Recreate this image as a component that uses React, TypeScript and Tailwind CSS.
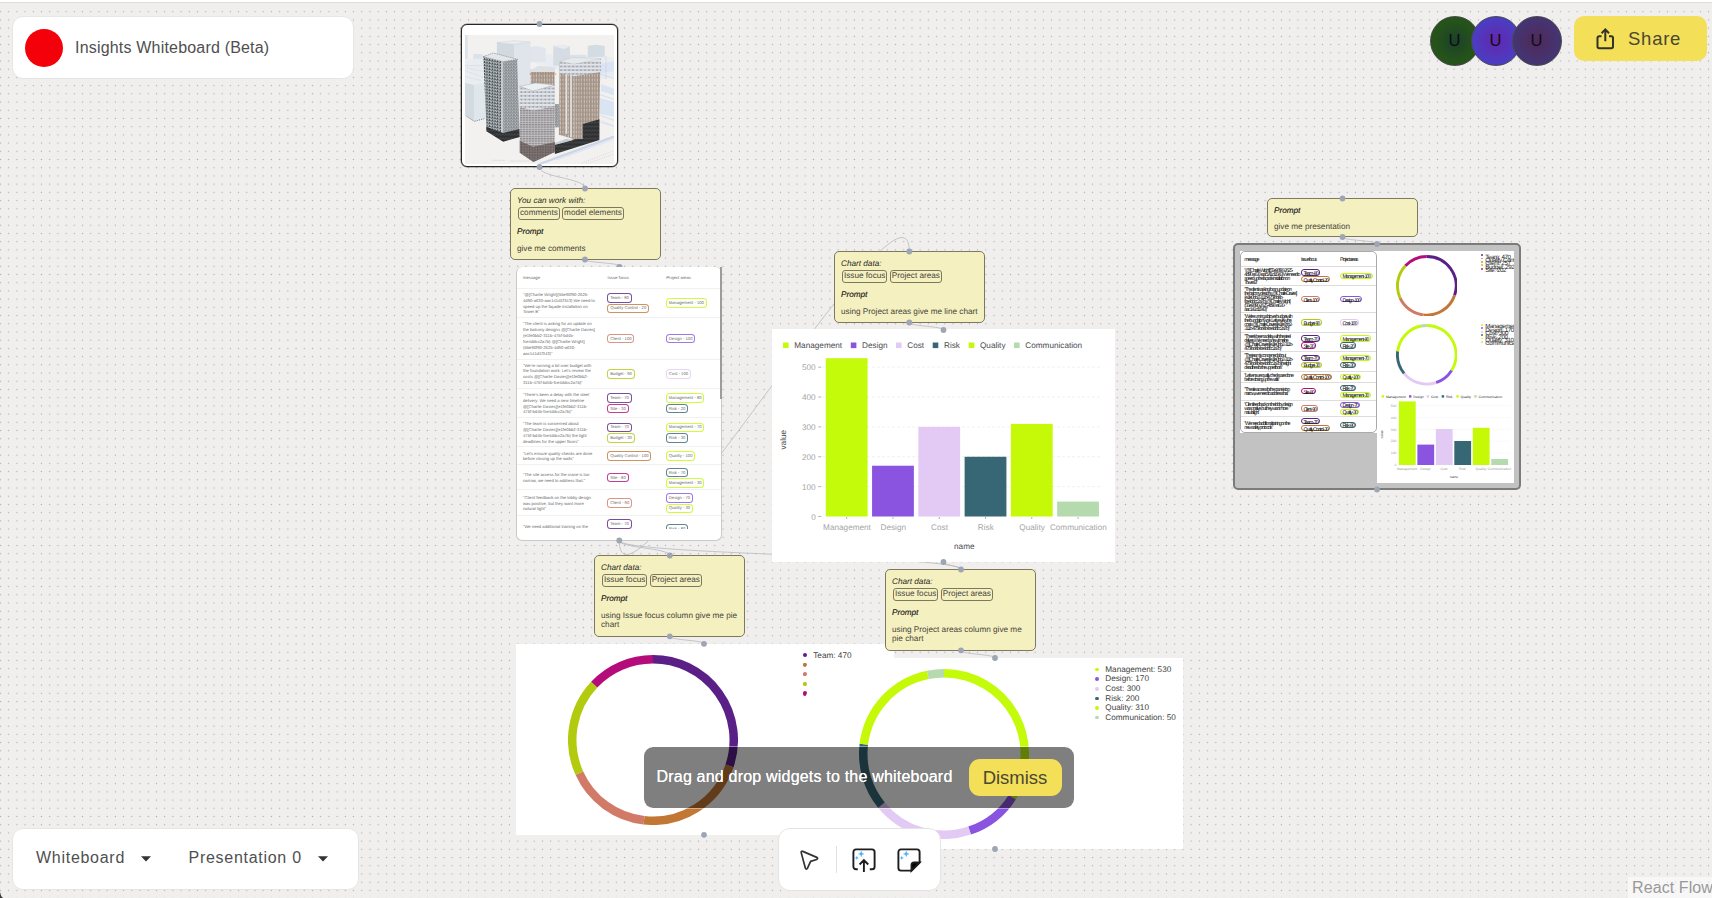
import React from "react";

const C = {
  Management: "#c3fb0a",
  Design: "#8a54e0",
  Cost: "#e3caf4",
  Risk: "#376774",
  Quality: "#c6f908",
  Communication: "#b5daae",
  Team: "#5b2087",
  "Quality Control": "#c27735",
  Client: "#d17a68",
  Budget: "#b3cb0f",
  Site: "#b40d7b",
} as Record<string, string>;

const projectAreas: [string, number][] = [
  ["Management", 530],
  ["Design", 170],
  ["Cost", 300],
  ["Risk", 200],
  ["Quality", 310],
  ["Communication", 50],
];

const issueFocus: [string, number][] = [
  ["Team", 470],
  ["Quality Control", 336],
  ["Client", 257],
  ["Budget", 292],
  ["Site", 202],
];

type Row = { lines: string[]; focus: string[]; areas: string[]; h: string; h2: string };

const rows: Row[] = [
  {
    lines: ['"@[Charlie Wright](55e90f90-2625-', "4d90-a630-aac141d1f343) We need to", "speed up the façade installation on", 'Tower B"'],
    focus: ["Team - 80", "Quality Control - 20"],
    areas: ["Management - 100"],
    h: "h-[29.5px]",
    h2: "h-[19.7px]",
  },
  {
    lines: ['"The client is asking for an update on', "the balcony designs @[Charlie Davies]", "(e1fe0bb2-311b-475f-bd4b-", "fce4ddcc2a7b) @[Charlie Wright]", "(55e90f90-2625-4d90-a630-", 'aac141d1f343)"'],
    focus: ["Client - 100"],
    areas: ["Design - 100"],
    h: "h-[41.4px]",
    h2: "h-[27px]",
  },
  {
    lines: ['"We\'re running a bit over budget with', "the foundation work. Let's review the", "costs @[Charlie Davies](e1fe0bb2-", '311b-475f-bd4b-fce4ddcc2a7b)"'],
    focus: ["Budget - 90"],
    areas: ["Cost - 100"],
    h: "h-[29.3px]",
    h2: "h-[19.6px]",
  },
  {
    lines: ['"There\'s been a delay with the steel', "delivery. We need a new timeline", "@[Charlie Davies](e1fe0bb2-311b-", '475f-bd4b-fce4ddcc2a7b)"'],
    focus: ["Team - 70", "Site - 30"],
    areas: ["Management - 80", "Risk - 20"],
    h: "h-[29.3px]",
    h2: "h-[19.4px]",
  },
  {
    lines: ['"The team is concerned about', "@[Charlie Davies](e1fe0bb2-311b-", "475f-bd4b-fce4ddcc2a7b) the tight", 'deadlines for the upper floors"'],
    focus: ["Team - 70", "Budget - 30"],
    areas: ["Management - 70", "Risk - 30"],
    h: "h-[29.2px]",
    h2: "h-[19.6px]",
  },
  {
    lines: ['"Let\'s ensure quality checks are done', 'before closing up the walls"'],
    focus: ["Quality Control - 100"],
    areas: ["Quality - 100"],
    h: "h-[18px]",
    h2: "h-[11px]",
  },
  {
    lines: ['"The site access for the crane is too', 'narrow, we need to address that."'],
    focus: ["Site - 80"],
    areas: ["Risk - 70", "Management - 30"],
    h: "h-[25px]",
    h2: "h-[18px]",
  },
  {
    lines: ['"Client feedback on the lobby design', "was positive, but they want more", 'natural light"'],
    focus: ["Client - 90"],
    areas: ["Design - 70", "Quality - 30"],
    h: "h-[26px]",
    h2: "h-[16.4px]",
  },
  {
    lines: ['"We need additional training on the', 'new safety protocols"'],
    focus: ["Team - 70", "Quality Control - 30"],
    areas: ["Risk - 80"],
    h: "h-[26px]",
    h2: "h-[16px]",
  },
];

const nameOf = (label: string) => label.slice(0, label.lastIndexOf(" - "));

function Pill({ label }: { label: string }) {
  return (
    <div
      className="flex h-[9.6px] w-fit items-center rounded-[3.5px] border-[1.4px] bg-white px-[1.8px] whitespace-nowrap"
      style={{ borderColor: C[nameOf(label)] + "cc" }}
    >
      {label}
    </div>
  );
}

function CommentsTable() {
  return (
    <div className="absolute left-[516px] top-[267px] h-[274px] w-[206px] rounded-[6px] border border-t-0 border-[#c9c9c9] bg-white font-['Liberation_Sans',sans-serif] text-[4.2px] leading-[5.87px] text-[#6a6a6a]">
      <div className="absolute right-[-1px] top-0 h-[132px] w-[2px] bg-[#9c9c9c]" />
      <div className="h-[261.5px] overflow-hidden">
        <div className="flex h-[21.7px] items-center border-b border-[#f1f1f1] pt-[1px] pl-[6px]">
          <div className="w-[84.6px]">message</div>
          <div className="w-[58.6px]">Issue focus</div>
          <div>Project areas</div>
        </div>
        {rows.map((r, i) => (
          <div key={i} className={"flex items-center border-b border-[#f1f1f1] pt-[0.6px] pl-[6px] " + r.h}>
            <div className="w-[84.4px] pt-[0.6px] whitespace-nowrap">
              {r.lines.map((l) => (
                <div key={l}>{l}</div>
              ))}
            </div>
            <div className="flex w-[58.6px] flex-col gap-[0.7px]">
              {r.focus.map((p) => (
                <Pill key={p} label={p} />
              ))}
            </div>
            <div className="flex flex-col gap-[0.7px]">
              {r.areas.map((p) => (
                <Pill key={p} label={p} />
              ))}
            </div>
          </div>
        ))}
      </div>
    </div>
  );
}

function MiniPill({ label }: { label: string }) {
  return (
    <div
      className="h-[6.3px] w-fit rounded-[3px] border px-[1.5px] pt-[1.6px] leading-[5.5px] whitespace-nowrap"
      style={{ borderColor: C[nameOf(label)] }}
    >
      {label}
    </div>
  );
}

function MiniTable() {
  return (
    <div className="h-[182px] w-[137px] overflow-hidden bg-white">
      <div className="h-[182px] overflow-hidden rounded-[5px] border border-[#aaaaaa] text-[5.4px] leading-[4px] tracking-[-1.1px] text-[#111111]">
        <div className="flex h-[14.5px] items-center border-b border-[#dddddd] pt-[3px] pl-[3.3px]">
          <div className="w-[56.7px]">message</div>
          <div className="w-[39px]">Issue focus</div>
          <div>Project areas</div>
        </div>
        {rows.map((r, i) => (
          <div key={i} className={"flex items-center border-b border-[#dddddd] pl-[3.3px] " + r.h2}>
            <div className="w-[56.7px] pt-[2px] whitespace-nowrap">
              {r.lines.map((l) => (
                <div key={l}>{l}</div>
              ))}
            </div>
            <div className="flex w-[39px] flex-col gap-[0.7px]">
              {r.focus.map((p) => (
                <MiniPill key={p} label={p} />
              ))}
            </div>
            <div className="flex flex-col gap-[0.7px]">
              {r.areas.map((p) => (
                <MiniPill key={p} label={p} />
              ))}
            </div>
          </div>
        ))}
      </div>
    </div>
  );
}

function Ring({ data, r, t, className }: { data: [string, number][]; r: number; t: number; className: string }) {
  const total = data.reduce((s, d) => s + d[1], 0);
  let acc = 0;
  const m = r - t / 2;
  const pt = (f: number) => {
    const a = f * Math.PI * 2 - Math.PI / 2;
    return `${(r + m * Math.cos(a)).toFixed(2)} ${(r + m * Math.sin(a)).toFixed(2)}`;
  };
  return (
    <svg className={className} viewBox={`0 0 ${2 * r} ${2 * r}`}>
      {data.map(([name, v]) => {
        const a = acc / total;
        acc += v;
        const b = acc / total;
        return (
          <path
            key={name}
            d={`M${pt(a)} A${m} ${m} 0 ${b - a > 0.5 ? 1 : 0} 1 ${pt(b)}`}
            fill="none"
            stroke={C[name]}
            strokeWidth={t}
          />
        );
      })}
    </svg>
  );
}

function BarChart() {
  const legendX = [11, 78.8, 124, 160.7, 196.7, 242];
  return (
    <svg
      className="absolute left-[772px] top-[329px] h-[232.5px] w-[342.5px] bg-white font-['Liberation_Sans',sans-serif]"
      viewBox="0 0 342.5 232.5"
      fontSize="8.2"
      textRendering="geometricPrecision"
    >
      {projectAreas.map(([n], i) => (
        <g key={n}>
          <rect x={legendX[i]} y="13.5" width="5.6" height="5.6" fill={C[n]} />
          <text x={legendX[i] + 11.3} y="18.9" fill="#4a4a4f">{n}</text>
        </g>
      ))}
      {[0, 100, 200, 300, 400, 500].map((v) => (
        <g key={v}>
          {v > 0 && <path d={`M50 ${187.5 - v * 0.2987}H329`} stroke="#eeeef0" strokeWidth="0.8" strokeDasharray="3 2" />}
          <path d={`M46.2 ${187.5 - v * 0.2987}h3`} stroke="#a0a0a0" strokeWidth="0.8" />
          <text x="43.7" y={190.5 - v * 0.2987} textAnchor="end" fill="#a5a5a8">{v}</text>
        </g>
      ))}
      {projectAreas.map(([n, v], i) => (
        <g key={n}>
          <rect x={53.8 + i * 46.27} y={187.5 - v * 0.2987} width="41.8" height={v * 0.2987} fill={C[n]} />
          <path d={`M${74.7 + i * 46.27} 188v2`} stroke="#a0a0a0" strokeWidth="0.8" />
          <text x={75 + i * 46.27} y="200.8" textAnchor="middle" fill="#a5a5a8">{n}</text>
        </g>
      ))}
      <text x="192.3" y="219.5" textAnchor="middle" fill="#4a4a4f">name</text>
      <text transform="translate(14 110.7) rotate(-90)" textAnchor="middle" fill="#4a4a4f">value</text>
    </svg>
  );
}

function MiniBarChart() {
  const legendX = [4.7, 32, 49.7, 64.7, 79.3, 97.3];
  return (
    <svg className="absolute left-0 top-[141px] h-[90px] w-[137px]" viewBox="0 0 137 90" fontSize="3.4" textRendering="geometricPrecision">
      {projectAreas.map(([n], i) => (
        <g key={n}>
          <rect x={legendX[i]} y="3.2" width="2.4" height="2.4" fill={C[n]} />
          <text x={legendX[i] + 4.2} y="5.7" fill="#333">{n}</text>
        </g>
      ))}
      {[0, 100, 200, 300, 400, 500].map((v) => (
        <g key={v}>
          <path d={`M21 ${73 - v * 0.1187}H133`} stroke="#f0f0f0" strokeWidth="0.6" strokeDasharray="1.5 1" />
          <text x="19.5" y={74.2 - v * 0.1187} textAnchor="end" fill="#999">{v}</text>
        </g>
      ))}
      {projectAreas.map(([n, v], i) => (
        <g key={n}>
          <rect x={21.9 + i * 18.47} y={73 - v * 0.12} width="16.8" height={v * 0.12} fill={C[n]} />
          <text x={30 + i * 18.47} y="78" textAnchor="middle" fill="#999">{n}</text>
        </g>
      ))}
      <text x="77" y="85.5" textAnchor="middle" fill="#444">name</text>
      <text transform="translate(6 42.5) rotate(-90)" textAnchor="middle" fill="#444">value</text>
    </svg>
  );
}

function MiniLegend({ data, className }: { data: [string, number][]; className: string }) {
  return (
    <div className={"absolute left-[104px] flex w-[33px] gap-[2.4px] overflow-hidden " + className}>
      <div className="flex flex-col gap-[1.5px]">
        {data.map(([n]) => (
          <div key={n} className="size-[1.9px] opacity-70" style={{ backgroundColor: C[n] }} />
        ))}
      </div>
      <div className="pt-[1.4px] text-[6.2px] leading-[3.4px] tracking-[-0.4px] whitespace-nowrap text-[#222222]">
        {data.map(([n, v]) => (
          <div key={n}>{n + ": " + v}</div>
        ))}
      </div>
    </div>
  );
}

function Presentation() {
  return (
    <div className="absolute left-[1233px] top-[243px] flex h-[247px] w-[288px] rounded-[5px] border-2 border-[#7b7b7b] bg-[#c2c2c2] pt-[6px] pl-[5px] font-['Liberation_Sans',sans-serif]">
      <MiniTable />
      <div className="relative h-[231.5px] w-[137px] bg-white">
        <Ring data={issueFocus} r={30.8} t={2.9} className="absolute left-[18.6px] top-[3.5px] size-[61.6px]" />
        <Ring data={projectAreas} r={30.8} t={2.9} className="absolute left-[18.6px] top-[73px] size-[61.6px]" />
        <MiniLegend data={issueFocus} className="top-[3.2px] h-[22px]" />
        <MiniLegend data={projectAreas} className="top-[73px] h-[24px]" />
        <MiniBarChart />
      </div>
    </div>
  );
}

function Note({ className, head, tags, text }: { className: string; head?: string; tags?: string[]; text: string }) {
  return (
    <div
      className={
        "absolute w-[151px] rounded-[5px] border border-[#7d795f] bg-[#f5f0c0] px-[6px] pt-[6.8px] font-['Liberation_Sans',sans-serif] text-[8.2px] leading-[9.7px] text-[#45443b] " +
        className
      }
    >
      {head && <div className="italic text-[#2c2b25]">{head}</div>}
      {tags && (
        <div className="mb-[7.6px] flex gap-[2.3px] pt-[1px] pl-[1px]">
          {tags.map((t) => (
            <div key={t} className="flex h-[13px] items-center rounded-[3px] border border-[#7d795f] px-[1px]">
              {t}
            </div>
          ))}
        </div>
      )}
      <div className="italic text-[#26251f] [text-shadow:0.1px_0_0_#26251f88]">Prompt</div>
      <div className="pt-[6.9px]">{text}</div>
    </div>
  );
}

function Legend({ data, className }: { data: { color: string; label?: string }[]; className: string }) {
  return (
    <div className={"absolute flex flex-col " + className}>
      {data.map((d) => (
        <div key={d.color} className="flex h-[9.63px] items-center gap-[6.6px] text-[8.2px] leading-[9.6px] whitespace-nowrap text-[#3f3f42]">
          <span className="size-[3.7px] rounded-full" style={{ backgroundColor: d.color }} />
          {d.label && <span>{d.label}</span>}
        </div>
      ))}
    </div>
  );
}

function Towers() {
  return (
    <svg className="h-[129px] w-[149px]" viewBox="15 43 449 387" preserveAspectRatio="none">
      <defs>
        <pattern id="wa" width="8" height="9" patternUnits="userSpaceOnUse" patternTransform="skewY(10)">
          <rect width="8" height="9" fill="#b4babd" />
          <path d="M0 0h3v6h-3zM4 4h3v5h-3z" fill="#353f44" />
          <path d="M3 8h3M5 1h2" stroke="#f4f5f6" strokeWidth="2" />
        </pattern>
        <pattern id="wb" width="8" height="9" patternUnits="userSpaceOnUse">
          <rect width="8" height="9" fill="#c3c7ca" />
          <path d="M1 1h3v6h-3zM5 5h2v4h-2z" fill="#4b535a" />
        </pattern>
        <pattern id="wc" width="9" height="7" patternUnits="userSpaceOnUse">
          <rect width="9" height="7" fill="#b9b6b7" />
          <path d="M1 2h5v4h-5z" fill="#807e83" />
          <path d="M0 0h9" stroke="#dcdcde" strokeWidth="2" />
        </pattern>
        <pattern id="wd" width="8" height="13" patternUnits="userSpaceOnUse">
          <rect width="8" height="13" fill="#bbb0a7" />
          <path d="M1 0h3v13h-3z" fill="#8b837e" />
          <path d="M4 2h3v2h-3zM0 8h4v2h-4z" fill="#b07f58" />
          <path d="M6 6v5" stroke="#e2dedb" strokeWidth="2" />
        </pattern>
        <pattern id="we" width="12" height="11" patternUnits="userSpaceOnUse">
          <rect width="12" height="11" fill="#e3e6ea" />
          <path d="M2 3h4v5h-4zM8 2h2v6h-2z" fill="#8c949d" />
        </pattern>
        <pattern id="wk" width="9" height="12" patternUnits="userSpaceOnUse">
          <rect width="9" height="12" fill="#2b2c2e" />
          <path d="M2 2h2v5h-2zM6 6h1v4h-1z" fill="#83868a" />
        </pattern>
        <pattern id="wr" width="8" height="8" patternUnits="userSpaceOnUse">
          <rect width="8" height="8" fill="#77706f" />
          <path d="M1 1h3v4h-3z" fill="#4a4345" />
          <path d="M5 0v8" stroke="#a08078" strokeWidth="1" />
        </pattern>
      </defs>
      <rect x="15" y="43" width="449" height="387" fill="#f2f1f0" />
      <path d="M15 120l60-18 30 10 0 60-90 20zM205 120l60-20 199 10v60l-60 10z" fill="#e9edf2" />
      <path d="M15 43h8v72h-8zM40 100h28v14h-28zM330 102h50v20h-50z" fill="#dbe2ea" />
      <path d="M15 135h50M15 150l60 22M20 142l50 10M15 168l50 12" stroke="#c6ccd3" strokeWidth="1.5" strokeDasharray="4 2" fill="none" />
      <path d="M420 130l44-8v30l-38 6zM425 190l39 14v20l-39-12zM422 232l42 12v44l-42-8z" fill="#dbe4f3" />
      <path d="M422 160l42 14M422 222l42 14M424 285l40 14M424 305l40 12M440 105v70" stroke="#c9d3e4" strokeWidth="2" fill="none" />
      <path d="M205 80l25-4 28 6v42h-53z" fill="#e0e6ec" />
      <path d="M281 76l20-4 30 5v58h-50z" fill="#d5dce3" />
      <path d="M281 76l20-4 30 5-18 8z" fill="#e8ecf0" />
      <path d="M385 75l25-3 26 4v32l-51 2z" fill="#d3dbe3" />
      <path d="M111 66l52 5v110l-52-60z" fill="#d2dae0" />
      <path d="M163 71l49-7v130l-49 10z" fill="#dfe5ea" />
      <path d="M111 66l52-6 49 4-49 7z" fill="#e9edf0" stroke="#bcc5cd" strokeWidth="1" />
      <path d="M15 186l27 6v110l-27-18z" fill="#d3dbe1" />
      <path d="M42 192l36-10v112l-36 10z" fill="#e0e7ec" />
      <path d="M15 186l30-6 33 3-36 9z" fill="#e9eef1" />
      <path d="M20 287l23 15 30-8" stroke="#6e757b" strokeWidth="3" strokeDasharray="3 4" fill="none" />
      <path d="M70 106l60 14v242l-50-30z" fill="url(#wa)" />
      <path d="M130 120l42-4 8 232-50 14z" fill="url(#wb)" />
      <path d="M124 118h5v220h-5z" fill="#d3d7da" />
      <path d="M70 108l30-11 74 19-44 7z" fill="#e4e7ea" stroke="#8a9298" strokeWidth="2" strokeDasharray="5 2" />
      <path d="M79 318l51 19 49-12 1 24-50 14-50-31z" fill="url(#wk)" />
      <path d="M213 147l72 0v60l-72-10z" fill="url(#wd)" />
      <path d="M213 147l24-12 50 5-2 14h-72z" fill="#dde1e5" />
      <path d="M210 160h80" stroke="#b88458" strokeWidth="3" strokeDasharray="6 5" />
      <path d="M286 250l12 0v70l-12 0z" fill="url(#wb)" />
      <path d="M300 125l45 6v225l-47-14z" fill="url(#wd)" />
      <path d="M345 128l78-8-4 225-74 12z" fill="url(#wd)" />
      <path d="M318 150h5v190h-5zM332 150h5v200h-5z" fill="#e2e2e2" />
      <path d="M300 122l45 8 80-14v38l-80 12-45-8z" fill="url(#we)" />
      <path d="M300 122l40-12 86 4-81 16z" fill="#e6e9ec" stroke="#b4bac0" strokeWidth="1" />
      <path d="M284 372l60-16 26-2v-44l50-14v62l-134 42z" fill="url(#wk)" />
      <path d="M284 368l36-14 22 4-54 14z" fill="#c5ccd5" />
      <path d="M180 196l40 14v214l-40-28z" fill="url(#wc)" />
      <path d="M220 210l66-16-1 200-65 30z" fill="url(#wc)" />
      <path d="M180 196l40 14 66-16v62l-66 14-40-12z" fill="url(#we)" />
      <path d="M180 197l48-10 58 6-66 18z" fill="#edf0f3" stroke="#a9b1b9" strokeWidth="1.5" />
      <path d="M180 360l40 18 66-14v30l-64 30-42-28z" fill="url(#wr)" />
      <path d="M240 430l224-82" stroke="#ccd6e8" strokeWidth="7" />
      <path d="M290 418l174-62M424 300l40 16" stroke="#dde4ef" strokeWidth="3" />
      <path d="M366 428l98-38M380 430l84-30" stroke="#bbb" strokeWidth="1.5" strokeDasharray="3 4" />
      <path d="M95 419h40M150 421h60" stroke="#dadada" strokeWidth="2" />
    </svg>
  );
}

type P = [number, number];
const edges: [P, P][] = [
  [[539.5, 167], [585, 188.5]],
  [[585, 259.5], [619.5, 266]],
  [[619.3, 540.5], [669.8, 555.5]],
  [[619.3, 540.5], [961, 569.5]],
  [[619.3, 540.5], [909.3, 251.5]],
  [[909.3, 322.5], [943.5, 330]],
  [[943.5, 562], [961, 569.5]],
  [[669.8, 636.5], [704, 643.8]],
  [[961, 650.5], [995, 658]],
  [[1342.5, 237], [1377, 244]],
];

function bezier([a, b]: [P, P]) {
  const d = b[1] - a[1];
  const off = d >= 0 ? d / 2 : 6 * Math.sqrt(-d);
  return `M${a[0]} ${a[1]} C${a[0]} ${a[1] + off} ${b[0]} ${b[1] - off} ${b[0]} ${b[1]}`;
}

const handles: P[] = [
  [539.5, 24], [539.5, 167], [585, 188.5], [585, 259.5], [619.3, 540.5],
  [909.3, 251.5], [909.3, 322.5], [943.5, 330], [943.5, 562],
  [669.8, 555.5], [669.8, 636.3], [704, 643.8], [704, 834.8],
  [961, 569.5], [961, 650.3], [995, 658], [995, 849],
  [1342.5, 198.5], [1342.5, 237], [1377, 244], [1377, 489.5],
];

function Sparkles() {
  return (
    <g fill="#4fb0f5">
      <path d="M8.6 2.6l.9 2.5 2.5.9-2.5.9-.9 2.5-.9-2.5-2.5-.9 2.5-.9z" />
      <path d="M4.2 7.9l.6 1.5 1.5.6-1.5.6-.6 1.5-.6-1.5-1.5-.6 1.5-.6z" />
    </g>
  );
}

export default function App() {
  return (
    <div className="relative h-[898px] w-[1712px] overflow-hidden bg-[#f0efee] font-['Liberation_Sans',Arial,sans-serif]">
      <svg className="absolute inset-0 size-full">
        <defs>
          <pattern id="dots" x="4.55" y="7.6" width="8.212" height="8.212" patternUnits="userSpaceOnUse">
            <circle cx="4.1" cy="4.1" r="0.66" fill="#ababad" />
          </pattern>
        </defs>
        <rect y="4" width="1712" height="894" fill="url(#dots)" />
        {edges.map((e, i) => (
          <path key={i} d={bezier(e)} fill="none" stroke="#b9b9be" strokeWidth="0.8" />
        ))}
        <path d="M0 892 Q.5 896 3 898 H0z" fill="#3b3b3b" />
      </svg>

      <div className="[text-rendering:geometricPrecision]">
        <div className="absolute left-[461px] top-[24px] h-[143px] w-[157px] rounded-[6px] border-[1.5px] border-[#262626] bg-white pt-[9.5px] pl-[3px] shadow-[0_0_0_0.5px_#26262688]">
          <Towers />
        </div>
        <Note className="left-[510px] top-[188px] h-[72px]" head="You can work with:" tags={["comments", "model elements"]} text="give me comments" />
        <CommentsTable />
        <Note className="left-[834px] top-[251px] h-[72px]" head="Chart data:" tags={["Issue focus", "Project areas"]} text="using Project areas give me line chart" />
        <BarChart />
        <div className="absolute left-[515.5px] top-[643.5px] h-[191.5px] w-[378px] bg-white">
          <Ring data={issueFocus} r={85} t={8.5} className="absolute left-[52.3px] top-[11px] size-[170px]" />
          <Legend
            className="left-[287.5px] top-[7px]"
            data={issueFocus.map(([n, v], i) => ({ color: C[n], label: i === 0 ? `${n}: ${v}` : undefined }))}
          />
        </div>
        <div className="absolute left-[806px] top-[657.5px] h-[191.5px] w-[377px] bg-white">
          <Ring data={projectAreas} r={85} t={8.5} className="absolute left-[53.3px] top-[11px] size-[170px]" />
          <Legend className="left-[289px] top-[7.2px]" data={projectAreas.map(([n, v]) => ({ color: C[n], label: `${n}: ${v}` }))} />
        </div>
        <div className="absolute left-[803px] top-[662.6px] flex flex-col gap-[5.93px]">
          <span className="size-[3.7px] rounded-full bg-[#c27735]" />
          <span className="size-[3.7px] rounded-full bg-[#d17a68]" />
          <span className="size-[3.7px] rounded-full bg-[#b3cb0f]" />
          <span className="size-[3.7px] rounded-full bg-[#b40d7b]" />
        </div>
        <Note className="left-[594px] top-[555px] h-[82px]" head="Chart data:" tags={["Issue focus", "Project areas"]} text="using Issue focus column give me pie chart" />
        <Note className="left-[885px] top-[569px] h-[82px]" head="Chart data:" tags={["Issue focus", "Project areas"]} text="using Project areas column give me pie chart" />
        <Note className="left-[1267px] top-[198px] h-[39px]" text="give me presentation" />
        <Presentation />
      </div>

      <svg className="absolute inset-0 size-full">
        <path d="M616.5 267a3 3 0 0 1 6 0z" fill="#9ea5b3" />
        {handles.map(([x, y]) => (
          <circle key={`${x}-${y}`} cx={x} cy={y} r="2.9" fill="#9ea5b3" />
        ))}
      </svg>

      <div className="absolute inset-x-0 top-0 h-[3px] border-b border-[#dcdcdc] bg-white" />

      <header className="absolute left-[12px] top-[16px] flex h-[63px] w-[342px] items-center rounded-[11px] border border-[#e6e6e6] bg-white pl-[12px]">
        <div className="size-[38px] rounded-full bg-[#f3000a]" />
        <div className="pl-[12px] text-[16px] tracking-[0.19px] text-[#4f4f4f]">Insights Whiteboard (Beta)</div>
      </header>

      <div className="absolute left-[1430px] top-[16px] flex items-start">
        <div className="flex pr-[20px] text-[16.5px] text-[#0b0d18]">
          <div className="flex size-[50px] items-center justify-center rounded-full border border-[#4a4a4a] bg-[radial-gradient(circle,#1b4128_0%,#26531a_60%)] pb-[2px] pr-px">U</div>
          <div className="-ml-[9px] flex size-[50px] items-center justify-center rounded-full border border-[#4a4a4a] bg-[radial-gradient(circle,#6426ac_0%,#4b3dc2_65%)] pb-[2px] pr-px">U</div>
          <div className="-ml-[9px] flex size-[50px] items-center justify-center rounded-full border border-[#4a4a4a] bg-[radial-gradient(circle,#512858_0%,#443572_65%)] pb-[2px] pr-px">U</div>
        </div>
        <button className="-ml-[8px] flex h-[45px] w-[133px] items-center rounded-[10px] bg-[#f4df59] pl-[21px] text-[18.5px] tracking-[0.75px] text-[#4a4733]">
          <svg className="h-[24px] w-[20px]" viewBox="0 0 20 24" fill="none" stroke="#33322a" strokeWidth="2">
            <path d="M6.5 9.2H4.2a1.7 1.7 0 0 0-1.7 1.7v8.6a1.7 1.7 0 0 0 1.7 1.7h12.1a1.7 1.7 0 0 0 1.7-1.7v-8.6a1.7 1.7 0 0 0-1.7-1.7H14M10.3 14.2V2.6M6.6 6.2l3.7-3.8L14 6.2" />
          </svg>
          <span className="pl-[13px]">Share</span>
        </button>
      </div>

      <div className="absolute left-[643px] top-[746px] flex h-[63px] w-[432px] items-center rounded-[10px] border border-[#ffffff66] bg-black/50 bg-clip-padding pl-[12.5px]">
        <span className="w-[312px] pb-[1px] text-[16px] tracking-[0.2px] whitespace-nowrap text-white [text-shadow:0_0_0.6px_#fff]">
          Drag and drop widgets to the whiteboard
        </span>
        <button className="flex h-[37px] w-[93px] items-center justify-center rounded-[11px] bg-[#f4df59] text-[18.5px] text-[#4a4733]">
          Dismiss
        </button>
      </div>

      <nav className="absolute left-[12px] top-[828px] flex h-[62px] w-[347px] items-center rounded-[11px] border border-[#e6e6e6] bg-white pl-[23px] text-[16px] tracking-[0.72px] whitespace-nowrap text-[#4f4f4f]">
        <span className="w-[105px] pb-[3px]">Whiteboard</span>
        <svg className="h-[6px] w-[10px]" viewBox="0 0 10 6">
          <path d="M0 .3h10L5 5.6z" fill="#333" />
        </svg>
        <span className="w-[129px] pb-[3px] pl-[37.5px]">Presentation 0</span>
        <svg className="ml-[38px] h-[6px] w-[10px]" viewBox="0 0 10 6">
          <path d="M0 .3h10L5 5.6z" fill="#333" />
        </svg>
      </nav>

      <div className="absolute left-[778px] top-[828px] flex h-[63px] w-[163px] items-center rounded-[12px] border border-[#e4e4e4] bg-white pl-[19px]">
        <svg className="h-[24px] w-[24px]" viewBox="0 0 24 24" fill="none" stroke="#333" strokeWidth="1.7" strokeLinejoin="round">
          <path d="M3.2 4.6c-.2-1.2.6-1.7 1.6-1.2l14 6c1.1.5 1 1.8-.1 2.1l-6.1 1.9-3.2 7c-.5 1-1.8.9-2-.2z" />
        </svg>
        <div className="mr-[14px] ml-[14px] h-[27px] w-px bg-[#e2e2e2]" />
        <svg className="h-[26px] w-[26px]" viewBox="0 0 26 26" fill="none" stroke="#1d1d1f" strokeWidth="1.9">
          <path d="M6.8 22.3H5a2.6 2.6 0 0 1-2.6-2.6V5A2.6 2.6 0 0 1 5 2.4h16A2.6 2.6 0 0 1 23.6 5v14.7a2.6 2.6 0 0 1-2.6 2.6h-2.2M12.9 25V13.6M8.600 17.5l4.3-4.3 4.3 4.3" />
          <g stroke="none" transform="translate(1.6 0.9)"><Sparkles /></g>
        </svg>
        <svg className="ml-[19px] h-[26px] w-[26px]" viewBox="0 0 26 26" fill="none" stroke="#1d1d1f" strokeWidth="1.9">
          <path d="M15.5 23.6H5A2.6 2.6 0 0 1 2.4 21V5A2.6 2.6 0 0 1 5 2.4h16A2.6 2.6 0 0 1 23.6 5v10.5z" />
          <path d="M15.5 23.6v-5.5a2.6 2.6 0 0 1 2.6-2.6h5.5z" fill="#000" />
          <g stroke="none" transform="translate(1.6 0.9)"><Sparkles /></g>
        </svg>
      </div>

      <div className="absolute right-0 bottom-0 flex h-[21px] w-[84px] items-center overflow-hidden bg-white/50 pt-[1px] pl-[4px] text-[16px] tracking-[0.1px] whitespace-nowrap text-[#999999]">
        React Flow
      </div>
    </div>
  );
}
